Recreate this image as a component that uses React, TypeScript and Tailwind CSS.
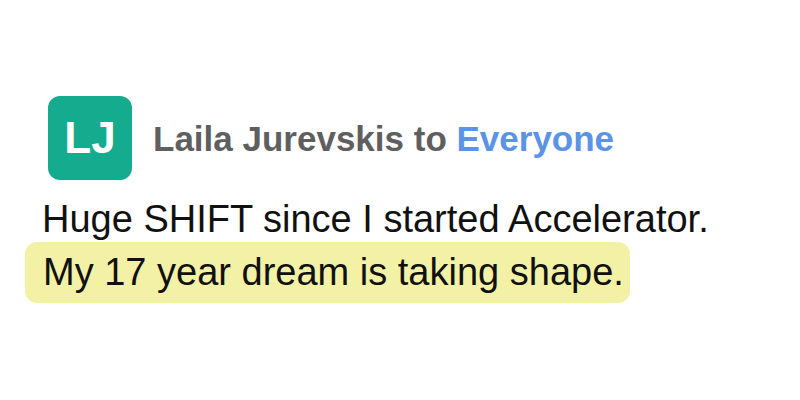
export default function App() {
  return (
    <div className="w-[800px] h-[400px] bg-white overflow-hidden" style={{ fontFamily: '"Liberation Sans", Arial, sans-serif' }}>
      <div className="pt-[96px] pl-[48px] flex items-center gap-[21px]">
        <div className="w-[84px] h-[84px] rounded-[12px] bg-[#14ab8e] flex items-center justify-center text-white font-bold text-[44px] leading-none">LJ</div>
        <div className="text-[35px] leading-none font-bold text-[#5f5f5f] whitespace-nowrap">
          Laila Jurevskis to <span className="text-[#5b93e6]">Everyone</span>
        </div>
      </div>
      <div className="pl-[25px] pt-[16px] text-[38px] text-[#111] whitespace-nowrap">
        <div className="pl-[17px] leading-[46px]">Huge SHIFT since I started Accelerator.</div>
        <div className="w-[605px] bg-[#f3f1a6] rounded-[12px] pl-[18px] h-[61px] leading-[61px]">My 17 year dream is taking shape.</div>
      </div>
    </div>
  );
}
